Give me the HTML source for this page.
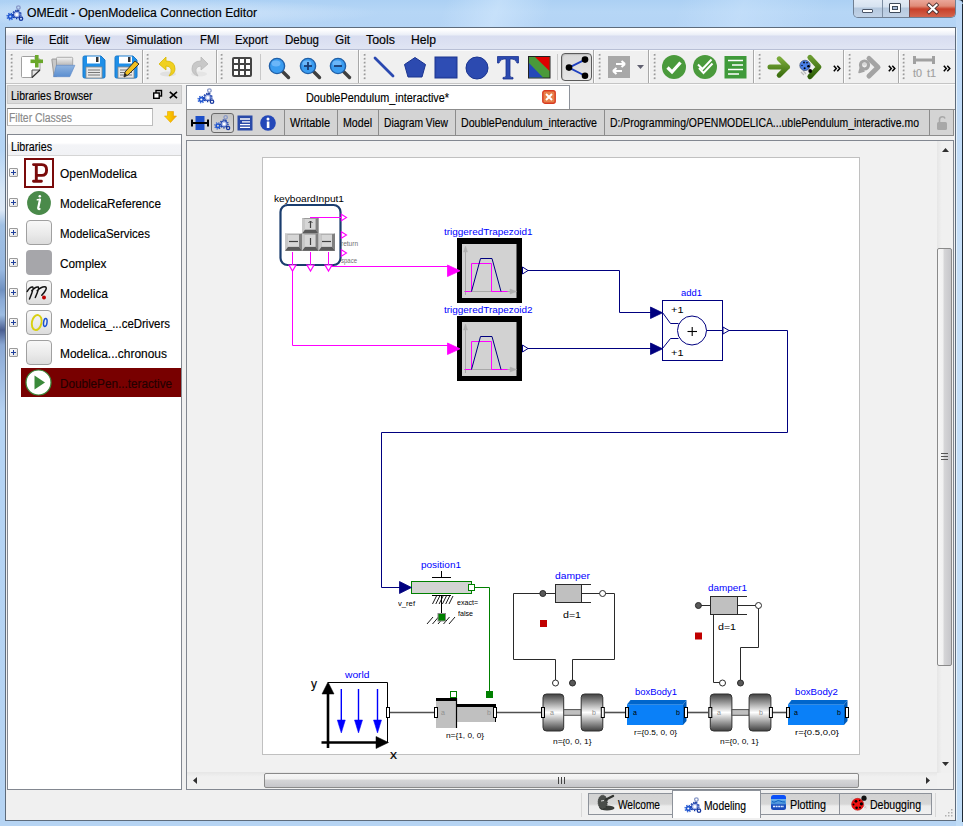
<!DOCTYPE html><html><head><meta charset="utf-8"><style>
html,body{margin:0;padding:0;width:963px;height:826px;overflow:hidden;position:relative;font-family:"Liberation Sans",sans-serif;}
.t{position:absolute;white-space:nowrap;transform-origin:0 0;}
.s{-webkit-text-stroke:0.15px currentColor;}
svg{overflow:visible}
</style></head><body><div style="position:absolute;left:0px;top:0px;width:963px;height:826px;background:linear-gradient(180deg,#acd0f4 0px,#b6d6f6 12px,#b4d4f5 26px,#b6d4f3 100%);"></div>
<div style="position:absolute;left:0px;top:0px;width:963px;height:27px;background:linear-gradient(110deg,rgba(255,255,255,0) 420px,rgba(220,238,255,0.45) 470px,rgba(255,255,255,0) 520px,rgba(255,255,255,0) 640px,rgba(215,235,255,0.35) 700px,rgba(255,255,255,0) 780px);"></div>
<div style="position:absolute;left:0px;top:0px;width:420px;height:28px;background:radial-gradient(ellipse 230px 14px at 150px 13px,rgba(215,232,250,0.9),rgba(215,232,250,0) 100%);"></div>
<div style="position:absolute;left:0px;top:150px;width:5px;height:260px;background:linear-gradient(180deg,rgba(0,0,0,0) 0,#d6e6f6 40px,#dce8f6 60px,#a0c0e4 75px,#98b8e0 120px,#6f90c0 140px,#8aaad6 150px,#9cbce2 165px,#4a5e90 180px,#8aa8d4 195px,#b4d0f0 260px);"></div>
<div style="position:absolute;left:956px;top:0px;width:6px;height:826px;background:linear-gradient(180deg,#bcd8f6,#c6dff8 30%,#c0dcf6 100%);"></div>
<div style="position:absolute;left:956px;top:28px;width:1px;height:792px;background:#e6f2fc;"></div>
<div style="position:absolute;left:962px;top:4px;width:1px;height:818px;background:#1f2a36;"></div>
<svg style="position:absolute;left:955px;top:0px;" width="8" height="6" viewBox="0 0 8 6"><path d="M3 0 Q8 0 8 5 L8 0 Z" fill="#1f2a36"/></svg>
<div style="position:absolute;left:5px;top:27px;width:951px;height:794px;background:#5d6b7b;"></div>
<div style="position:absolute;left:6px;top:28px;width:949px;height:792px;background:#f0f0f0;"></div>
<div class="t s" style="left:27px;top:7px;font-size:12px;line-height:12px;color:#000;transform:scaleX(1.0142);">OMEdit - OpenModelica Connection Editor</div>
<div style="position:absolute;left:853px;top:-2px;width:103px;height:20px;border:1px solid #6f7f93;border-top:none;border-radius:0 0 5px 5px;overflow:hidden;box-sizing:border-box">
<div style="position:absolute;left:0;top:0;width:28px;height:20px;background:linear-gradient(180deg,#e6eef8 0,#d6e2f0 45%,#b5c8de 50%,#c4d4e8 100%);"></div>
<div style="position:absolute;left:28px;top:0;width:1px;height:20px;background:#7d8ea3"></div>
<div style="position:absolute;left:29px;top:0;width:26px;height:20px;background:linear-gradient(180deg,#e6eef8 0,#d6e2f0 45%,#b5c8de 50%,#c4d4e8 100%);"></div>
<div style="position:absolute;left:55px;top:0;width:1px;height:20px;background:#7d4a4a"></div>
<div style="position:absolute;left:56px;top:0;width:47px;height:20px;background:linear-gradient(180deg,#eeb0a4 0,#e08c78 40%,#c8402a 55%,#d46a52 100%);"></div>
</div>
<div style="position:absolute;left:862px;top:9px;width:11px;height:4px;background:#fff;border:1px solid #4a5568;box-sizing:border-box;border-radius:1px"></div>
<div style="position:absolute;left:889px;top:3px;width:12px;height:10px;border:1px solid #3e4a5a;box-sizing:border-box;background:#fff;border-radius:1px"></div>
<div style="position:absolute;left:892px;top:6px;width:6px;height:4px;border:1px solid #3e4a5a;box-sizing:border-box;background:#a8bcd8;"></div>
<svg style="position:absolute;left:926px;top:2px;" width="14" height="12" viewBox="0 0 14 12"><path d="M3 3 L10.5 10 M10.5 3 L3 10" stroke="#4a3030" stroke-width="3.8" stroke-linecap="square"/><path d="M3 3 L10.5 10 M10.5 3 L3 10" stroke="#fff" stroke-width="2.2" stroke-linecap="square"/></svg>
<div style="position:absolute;left:6px;top:28px;width:949px;height:22px;background:linear-gradient(180deg,#ffffff 0px,#fdfdfe 2px,#eaeef7 7px,#d8ddf0 8px,#dfe4f3 20px);"></div>
<div style="position:absolute;left:6px;top:49px;width:949px;height:1px;background:#b8bfd5;"></div>
<div style="position:absolute;left:6px;top:50px;width:949px;height:1px;background:#fbfbfb;"></div>
<div class="t s" style="left:16px;top:34px;font-size:12px;line-height:12px;color:#000;transform:scaleX(0.9050);">File</div>
<div class="t s" style="left:49px;top:34px;font-size:12px;line-height:12px;color:#000;transform:scaleX(0.9430);">Edit</div>
<div class="t s" style="left:85px;top:34px;font-size:12px;line-height:12px;color:#000;transform:scaleX(0.9692);">View</div>
<div class="t s" style="left:126px;top:34px;font-size:12px;line-height:12px;color:#000;transform:scaleX(1.0084);">Simulation</div>
<div class="t s" style="left:200px;top:34px;font-size:12px;line-height:12px;color:#000;transform:scaleX(0.9438);">FMI</div>
<div class="t s" style="left:235px;top:34px;font-size:12px;line-height:12px;color:#000;transform:scaleX(0.9515);">Export</div>
<div class="t s" style="left:285px;top:34px;font-size:12px;line-height:12px;color:#000;transform:scaleX(0.9615);">Debug</div>
<div class="t s" style="left:335px;top:34px;font-size:12px;line-height:12px;color:#000;transform:scaleX(0.9782);">Git</div>
<div class="t s" style="left:366px;top:34px;font-size:12px;line-height:12px;color:#000;transform:scaleX(1.0352);">Tools</div>
<div class="t s" style="left:411px;top:34px;font-size:12px;line-height:12px;color:#000;transform:scaleX(1.0129);">Help</div>
<div style="position:absolute;left:6px;top:83px;width:949px;height:1px;background:#c5c5c5;"></div>
<div style="position:absolute;left:6px;top:84px;width:949px;height:1px;background:#fafafa;"></div>
<svg style="position:absolute;left:3px;top:3px;" width="22" height="20" viewBox="0 0 22 20"><g transform="scale(1.0)"><path d="M15 6.5 L14.5 8 M16.2 14 L17 15" stroke="#1a3a90" stroke-width="1.2"/><circle cx="7.3" cy="13.5" r="1.9000000000000001" fill="none" stroke="#1f55d0" stroke-width="1.6"/><circle cx="7.3" cy="13.5" r="3.3000000000000003" fill="none" stroke="#1f55d0" stroke-width="1.2" stroke-dasharray="1.30 1.30"/><circle cx="13.8" cy="11.5" r="2.6" fill="none" stroke="#1238a8" stroke-width="2.0"/><circle cx="13.8" cy="11.5" r="4.2" fill="none" stroke="#1238a8" stroke-width="1.2" stroke-dasharray="1.47 1.47"/><circle cx="13.8" cy="11.5" r="2.2" fill="#fff" stroke="#a8b8e8" stroke-width="1.2"/><circle cx="15.4" cy="4.6" r="1.8" fill="none" stroke="#8898c8" stroke-width="1.3"/><circle cx="18" cy="15.7" r="1.7" fill="none" stroke="#1a3aa0" stroke-width="1.3"/></g></svg>
<svg style="position:absolute;left:10px;top:53px;" width="3" height="28" viewBox="0 0 3 28"><rect x="0" y="0.0" width="2" height="2" fill="#fafafa"/><rect x="0.7" y="0.9" width="1.8" height="1.8" fill="#9a9a9a"/><rect x="0" y="3.9" width="2" height="2" fill="#fafafa"/><rect x="0.7" y="4.8" width="1.8" height="1.8" fill="#9a9a9a"/><rect x="0" y="7.8" width="2" height="2" fill="#fafafa"/><rect x="0.7" y="8.7" width="1.8" height="1.8" fill="#9a9a9a"/><rect x="0" y="11.7" width="2" height="2" fill="#fafafa"/><rect x="0.7" y="12.6" width="1.8" height="1.8" fill="#9a9a9a"/><rect x="0" y="15.6" width="2" height="2" fill="#fafafa"/><rect x="0.7" y="16.5" width="1.8" height="1.8" fill="#9a9a9a"/><rect x="0" y="19.5" width="2" height="2" fill="#fafafa"/><rect x="0.7" y="20.4" width="1.8" height="1.8" fill="#9a9a9a"/><rect x="0" y="23.4" width="2" height="2" fill="#fafafa"/><rect x="0.7" y="24.3" width="1.8" height="1.8" fill="#9a9a9a"/></svg>
<svg style="position:absolute;left:20px;top:55px;" width="25" height="24" viewBox="0 0 25 24">
<path d="M1.5 2.5 Q1.5 1.5 2.5 1.5 L15 1.5 L15 4 L20 4 L20 15 L12 22.5 L2.5 22.5 Q1.5 22.5 1.5 21.5 Z" fill="#fff" stroke="#a0a0a0" stroke-width="1"/>
<path d="M20 15 L12 15 L12 22.5" fill="#e6e6e6" stroke="#505050" stroke-width="1"/>
<path d="M20 15 L12 22.5" stroke="#303030" stroke-width="1.2"/>
<rect x="15" y="0" width="3.6" height="12.5" fill="#6aa82a"/>
<rect x="10.5" y="4.5" width="12.5" height="3.6" fill="#6aa82a"/>
</svg>
<svg style="position:absolute;left:51px;top:55px;" width="25" height="24" viewBox="0 0 25 24">
<defs><linearGradient id="fg1" x1="0" y1="0" x2="0" y2="1"><stop offset="0" stop-color="#f4f4f4"/><stop offset="1" stop-color="#b0b0b0"/></linearGradient>
<linearGradient id="fb1" x1="0" y1="0" x2="0" y2="1"><stop offset="0" stop-color="#90b4e0"/><stop offset="1" stop-color="#5a8ed0"/></linearGradient></defs>
<path d="M0.8 4.5 Q0.8 4 1.5 4 L5.5 4 L5.5 21.5 L3 21.5 Z" fill="#c8c8c8" stroke="#8a8a8a" stroke-width="0.8"/>
<rect x="5.5" y="2.3" width="16.2" height="9" rx="1" fill="url(#fg1)" stroke="#9a9a9a" stroke-width="0.8"/>
<path d="M5.4 10.3 L23.9 10.3 L18.8 21.7 L2.5 21.7 Z" fill="url(#fb1)" stroke="#5a88c8" stroke-width="0.6"/>
</svg>
<svg style="position:absolute;left:82px;top:55px;" width="25" height="24" viewBox="0 0 25 24">
<path d="M1 2.5 Q1 1 2.5 1 L19 1 L23 5 L23 21.5 Q23 23 21.5 23 L2.5 23 Q1 23 1 21.5 Z" fill="#1e8fe8" stroke="#1a78c8"/>
<rect x="5" y="1.5" width="13" height="7" fill="#fff"/>
<rect x="14" y="2" width="2.5" height="5" fill="#333"/>
<rect x="4" y="12" width="16" height="11" fill="#e8e8e8" stroke="#888" stroke-width="0.8"/>
<path d="M6 15 H18 M6 17.5 H18 M6 20 H18" stroke="#777" stroke-width="1"/>
</svg>
<svg style="position:absolute;left:114px;top:55px;" width="25" height="24" viewBox="0 0 25 24">
<path d="M1 2.5 Q1 1 2.5 1 L19 1 L23 5 L23 21.5 Q23 23 21.5 23 L2.5 23 Q1 23 1 21.5 Z" fill="#1e8fe8" stroke="#1a78c8"/>
<rect x="5" y="1.5" width="13" height="7" fill="#fff"/>
<rect x="14" y="2" width="2.5" height="5" fill="#333"/>
<rect x="4" y="12" width="16" height="11" fill="#e8e8e8" stroke="#888" stroke-width="0.8"/>
<path d="M6 15 H18 M6 17.5 H18 M6 20 H18" stroke="#777" stroke-width="1"/>
<path d="M10 22 L11 17 L21 6 L25 9 L14 20 Z" fill="#f2c020" stroke="#333" stroke-width="1"/><path d="M10 22 L11 18 L13 20 Z" fill="#222"/></svg>
<div style="position:absolute;left:142px;top:50px;width:1px;height:33px;background:#a8a8a8;"></div>
<div style="position:absolute;left:143px;top:51px;width:1px;height:32px;background:#fdfdfd;"></div>
<svg style="position:absolute;left:146px;top:53px;" width="3" height="28" viewBox="0 0 3 28"><rect x="0" y="0.0" width="2" height="2" fill="#fafafa"/><rect x="0.7" y="0.9" width="1.8" height="1.8" fill="#9a9a9a"/><rect x="0" y="3.9" width="2" height="2" fill="#fafafa"/><rect x="0.7" y="4.8" width="1.8" height="1.8" fill="#9a9a9a"/><rect x="0" y="7.8" width="2" height="2" fill="#fafafa"/><rect x="0.7" y="8.7" width="1.8" height="1.8" fill="#9a9a9a"/><rect x="0" y="11.7" width="2" height="2" fill="#fafafa"/><rect x="0.7" y="12.6" width="1.8" height="1.8" fill="#9a9a9a"/><rect x="0" y="15.6" width="2" height="2" fill="#fafafa"/><rect x="0.7" y="16.5" width="1.8" height="1.8" fill="#9a9a9a"/><rect x="0" y="19.5" width="2" height="2" fill="#fafafa"/><rect x="0.7" y="20.4" width="1.8" height="1.8" fill="#9a9a9a"/><rect x="0" y="23.4" width="2" height="2" fill="#fafafa"/><rect x="0.7" y="24.3" width="1.8" height="1.8" fill="#9a9a9a"/></svg>
<svg style="position:absolute;left:158px;top:56px;" width="20" height="21" viewBox="0 0 20 21">
<ellipse cx="10" cy="18" rx="8" ry="2.5" fill="#d8d8d8" opacity="0.7"/>
<path d="M1 8 L8 1 L8 5 Q17 5 17 13 Q17 18 11 20 Q14 16 13 13 Q12 10 8 10 L8 14 Z" fill="#f0d020" stroke="#d8b800" stroke-width="0.8"/>
</svg>
<svg style="position:absolute;left:190px;top:56px;" width="20" height="21" viewBox="0 0 20 21">
<ellipse cx="9" cy="18" rx="8" ry="2.5" fill="#e0e0e0" opacity="0.7"/>
<path d="M18 8 L11 1 L11 5 Q2 5 2 13 Q2 18 8 20 Q5 16 6 13 Q7 10 11 10 L11 14 Z" fill="#c8c8c8" stroke="#b8b8b8" stroke-width="0.8"/>
</svg>
<div style="position:absolute;left:216px;top:50px;width:1px;height:33px;background:#a8a8a8;"></div>
<div style="position:absolute;left:217px;top:51px;width:1px;height:32px;background:#fdfdfd;"></div>
<svg style="position:absolute;left:220px;top:53px;" width="3" height="28" viewBox="0 0 3 28"><rect x="0" y="0.0" width="2" height="2" fill="#fafafa"/><rect x="0.7" y="0.9" width="1.8" height="1.8" fill="#9a9a9a"/><rect x="0" y="3.9" width="2" height="2" fill="#fafafa"/><rect x="0.7" y="4.8" width="1.8" height="1.8" fill="#9a9a9a"/><rect x="0" y="7.8" width="2" height="2" fill="#fafafa"/><rect x="0.7" y="8.7" width="1.8" height="1.8" fill="#9a9a9a"/><rect x="0" y="11.7" width="2" height="2" fill="#fafafa"/><rect x="0.7" y="12.6" width="1.8" height="1.8" fill="#9a9a9a"/><rect x="0" y="15.6" width="2" height="2" fill="#fafafa"/><rect x="0.7" y="16.5" width="1.8" height="1.8" fill="#9a9a9a"/><rect x="0" y="19.5" width="2" height="2" fill="#fafafa"/><rect x="0.7" y="20.4" width="1.8" height="1.8" fill="#9a9a9a"/><rect x="0" y="23.4" width="2" height="2" fill="#fafafa"/><rect x="0.7" y="24.3" width="1.8" height="1.8" fill="#9a9a9a"/></svg>
<svg style="position:absolute;left:231px;top:56px;" width="22" height="22" viewBox="0 0 22 22">
<rect x="1" y="1" width="20" height="20" rx="2" fill="#444"/>
<rect x="3" y="3" width="4" height="4" fill="#fff"/><rect x="3" y="9" width="4" height="4" fill="#fff"/><rect x="3" y="15" width="4" height="4" fill="#fff"/><rect x="9" y="3" width="4" height="4" fill="#fff"/><rect x="9" y="9" width="4" height="4" fill="#fff"/><rect x="9" y="15" width="4" height="4" fill="#fff"/><rect x="15" y="3" width="4" height="4" fill="#fff"/><rect x="15" y="9" width="4" height="4" fill="#fff"/><rect x="15" y="15" width="4" height="4" fill="#fff"/></svg>
<div style="position:absolute;left:260px;top:54px;width:1px;height:26px;background:#c8c8c8;"></div>
<svg style="position:absolute;left:268px;top:57px;" width="23" height="22" viewBox="0 0 23 22">
<path d="M13.5 13.5 L20.5 20.5" stroke="#404040" stroke-width="3.4" stroke-linecap="round"/>
<circle cx="9" cy="9" r="7.6" fill="#3a9cf0" stroke="#1f5fa8" stroke-width="1.4"/>
<ellipse cx="8" cy="6.5" rx="4.5" ry="3" fill="#8cc8ff" opacity="0.6"/>
</svg>
<svg style="position:absolute;left:299px;top:57px;" width="23" height="22" viewBox="0 0 23 22">
<path d="M13.5 13.5 L20.5 20.5" stroke="#404040" stroke-width="3.4" stroke-linecap="round"/>
<circle cx="9" cy="9" r="7.6" fill="#3a9cf0" stroke="#1f5fa8" stroke-width="1.4"/>
<ellipse cx="8" cy="6.5" rx="4.5" ry="3" fill="#8cc8ff" opacity="0.6"/>
<path d="M5 9 H13" stroke="#1a3a70" stroke-width="1.8"/><path d="M9 5 V13" stroke="#1a3a70" stroke-width="1.8"/></svg>
<svg style="position:absolute;left:329px;top:57px;" width="23" height="22" viewBox="0 0 23 22">
<path d="M13.5 13.5 L20.5 20.5" stroke="#404040" stroke-width="3.4" stroke-linecap="round"/>
<circle cx="9" cy="9" r="7.6" fill="#3a9cf0" stroke="#1f5fa8" stroke-width="1.4"/>
<ellipse cx="8" cy="6.5" rx="4.5" ry="3" fill="#8cc8ff" opacity="0.6"/>
<path d="M5 9 H13" stroke="#1a3a70" stroke-width="1.8"/></svg>
<div style="position:absolute;left:358px;top:50px;width:1px;height:33px;background:#a8a8a8;"></div>
<div style="position:absolute;left:359px;top:51px;width:1px;height:32px;background:#fdfdfd;"></div>
<svg style="position:absolute;left:363px;top:53px;" width="3" height="28" viewBox="0 0 3 28"><rect x="0" y="0.0" width="2" height="2" fill="#fafafa"/><rect x="0.7" y="0.9" width="1.8" height="1.8" fill="#9a9a9a"/><rect x="0" y="3.9" width="2" height="2" fill="#fafafa"/><rect x="0.7" y="4.8" width="1.8" height="1.8" fill="#9a9a9a"/><rect x="0" y="7.8" width="2" height="2" fill="#fafafa"/><rect x="0.7" y="8.7" width="1.8" height="1.8" fill="#9a9a9a"/><rect x="0" y="11.7" width="2" height="2" fill="#fafafa"/><rect x="0.7" y="12.6" width="1.8" height="1.8" fill="#9a9a9a"/><rect x="0" y="15.6" width="2" height="2" fill="#fafafa"/><rect x="0.7" y="16.5" width="1.8" height="1.8" fill="#9a9a9a"/><rect x="0" y="19.5" width="2" height="2" fill="#fafafa"/><rect x="0.7" y="20.4" width="1.8" height="1.8" fill="#9a9a9a"/><rect x="0" y="23.4" width="2" height="2" fill="#fafafa"/><rect x="0.7" y="24.3" width="1.8" height="1.8" fill="#9a9a9a"/></svg>
<svg style="position:absolute;left:373px;top:56px;" width="22" height="22" viewBox="0 0 22 22"><path d="M2 2 L20 20" stroke="#2a48b0" stroke-width="2.8" stroke-linecap="round"/></svg>
<svg style="position:absolute;left:403px;top:56px;" width="24" height="23" viewBox="0 0 24 23"><path d="M12 1.5 L22.5 8.5 L19 21 L5 21 L1.5 8.5 Z" fill="#2c4ab0" stroke="#1a3490" stroke-width="1"/></svg>
<svg style="position:absolute;left:434px;top:56px;" width="24" height="23" viewBox="0 0 24 23"><rect x="1" y="1" width="22" height="21" fill="#2c4ab0" stroke="#1a3490"/><rect x="3" y="3" width="18" height="17" fill="#3050b8" opacity="0.5"/></svg>
<svg style="position:absolute;left:465px;top:56px;" width="24" height="24" viewBox="0 0 24 24"><circle cx="12" cy="12" r="11" fill="#2c4ab0" stroke="#1a3490"/></svg>
<svg style="position:absolute;left:496px;top:55px;" width="24" height="25" viewBox="0 0 24 25"><path d="M1.5 1.5 H22.5 V8 H21 Q20 4 16 4 H14 V21 Q14 22.5 17 22.5 V24 H7 V22.5 Q10 22.5 10 21 V4 H8 Q4 4 3 8 H1.5 Z" fill="#2c4ab0" stroke="#1a3490" stroke-width="0.8"/></svg>
<svg style="position:absolute;left:528px;top:56px;" width="23" height="23" viewBox="0 0 23 23">
<rect x="0.5" y="0.5" width="21.5" height="21.5" fill="#4a9a3a" stroke="#222" stroke-width="1"/>
<path d="M7 1 L21.5 1 L21.5 15 Z" fill="#e00000"/>
<path d="M1 7 L1 21.5 L15 21.5 Z" fill="#2448b8"/>
</svg>
<div style="position:absolute;left:557px;top:54px;width:1px;height:26px;background:#c8c8c8;"></div>
<div style="position:absolute;left:561px;top:53px;width:31px;height:28px;border:1px solid #5a5a5a;border-radius:4px;box-sizing:border-box;background:linear-gradient(180deg,#d8d8d8,#e6e6e6);box-shadow:inset 1px 1px 1px #bdbdbd;"></div>
<svg style="position:absolute;left:563px;top:54px;" width="28" height="26" viewBox="0 0 28 26"><path d="M6 13.6 L22 5.6 M6 13.6 L22 21.7" stroke="#1e40c0" stroke-width="1.8"/><circle cx="6" cy="13.6" r="3.3" fill="#000"/><circle cx="22" cy="5.6" r="3.3" fill="#000"/><circle cx="22" cy="21.7" r="3.3" fill="#000"/></svg>
<div style="position:absolute;left:593px;top:50px;width:1px;height:33px;background:#a8a8a8;"></div>
<div style="position:absolute;left:594px;top:51px;width:1px;height:32px;background:#fdfdfd;"></div>
<svg style="position:absolute;left:598px;top:53px;" width="3" height="28" viewBox="0 0 3 28"><rect x="0" y="0.0" width="2" height="2" fill="#fafafa"/><rect x="0.7" y="0.9" width="1.8" height="1.8" fill="#9a9a9a"/><rect x="0" y="3.9" width="2" height="2" fill="#fafafa"/><rect x="0.7" y="4.8" width="1.8" height="1.8" fill="#9a9a9a"/><rect x="0" y="7.8" width="2" height="2" fill="#fafafa"/><rect x="0.7" y="8.7" width="1.8" height="1.8" fill="#9a9a9a"/><rect x="0" y="11.7" width="2" height="2" fill="#fafafa"/><rect x="0.7" y="12.6" width="1.8" height="1.8" fill="#9a9a9a"/><rect x="0" y="15.6" width="2" height="2" fill="#fafafa"/><rect x="0.7" y="16.5" width="1.8" height="1.8" fill="#9a9a9a"/><rect x="0" y="19.5" width="2" height="2" fill="#fafafa"/><rect x="0.7" y="20.4" width="1.8" height="1.8" fill="#9a9a9a"/><rect x="0" y="23.4" width="2" height="2" fill="#fafafa"/><rect x="0.7" y="24.3" width="1.8" height="1.8" fill="#9a9a9a"/></svg>
<svg style="position:absolute;left:608px;top:56px;" width="38" height="23" viewBox="0 0 38 23">
<rect x="0" y="0" width="22" height="22" fill="#a8a8a8"/>
<path d="M8 8 H17 M17 8 L13.5 5 M17 8 L13.5 11" stroke="#fff" stroke-width="2.2" fill="none"/>
<path d="M14 15 H5 M5 15 L8.5 12 M5 15 L8.5 18" stroke="#fff" stroke-width="2.2" fill="none"/>
<path d="M29 9 L36 9 L32.5 13 Z" fill="#606070"/>
</svg>
<div style="position:absolute;left:648px;top:50px;width:1px;height:33px;background:#a8a8a8;"></div>
<div style="position:absolute;left:649px;top:51px;width:1px;height:32px;background:#fdfdfd;"></div>
<svg style="position:absolute;left:653px;top:53px;" width="3" height="28" viewBox="0 0 3 28"><rect x="0" y="0.0" width="2" height="2" fill="#fafafa"/><rect x="0.7" y="0.9" width="1.8" height="1.8" fill="#9a9a9a"/><rect x="0" y="3.9" width="2" height="2" fill="#fafafa"/><rect x="0.7" y="4.8" width="1.8" height="1.8" fill="#9a9a9a"/><rect x="0" y="7.8" width="2" height="2" fill="#fafafa"/><rect x="0.7" y="8.7" width="1.8" height="1.8" fill="#9a9a9a"/><rect x="0" y="11.7" width="2" height="2" fill="#fafafa"/><rect x="0.7" y="12.6" width="1.8" height="1.8" fill="#9a9a9a"/><rect x="0" y="15.6" width="2" height="2" fill="#fafafa"/><rect x="0.7" y="16.5" width="1.8" height="1.8" fill="#9a9a9a"/><rect x="0" y="19.5" width="2" height="2" fill="#fafafa"/><rect x="0.7" y="20.4" width="1.8" height="1.8" fill="#9a9a9a"/><rect x="0" y="23.4" width="2" height="2" fill="#fafafa"/><rect x="0.7" y="24.3" width="1.8" height="1.8" fill="#9a9a9a"/></svg>
<svg style="position:absolute;left:662px;top:55px;" width="25" height="25" viewBox="0 0 25 25"><circle cx="12" cy="12" r="12" fill="#4a9a3c"/><path d="M5.5 12.5 L10 17 L18.5 7.5" stroke="#fff" stroke-width="3.2" fill="none"/></svg>
<svg style="position:absolute;left:693px;top:55px;" width="25" height="25" viewBox="0 0 25 25"><circle cx="12" cy="12" r="12" fill="#4a9a3c"/><path d="M5 9.5 L9.5 14 L18.5 4.5" stroke="#fff" stroke-width="2" fill="none"/><path d="M6 13 L10.5 18 L19.5 8.5" stroke="#fff" stroke-width="2" fill="none"/></svg>
<svg style="position:absolute;left:724px;top:56px;" width="23" height="23" viewBox="0 0 23 23"><rect x="0.5" y="0" width="22" height="22.5" fill="#3f9a3a"/><path d="M4 4.5 H19 M8 9 H19 M4 13.5 H19 M4 18 H15" stroke="#fff" stroke-width="1.6"/></svg>
<div style="position:absolute;left:753px;top:50px;width:1px;height:33px;background:#a8a8a8;"></div>
<div style="position:absolute;left:754px;top:51px;width:1px;height:32px;background:#fdfdfd;"></div>
<svg style="position:absolute;left:758px;top:53px;" width="3" height="28" viewBox="0 0 3 28"><rect x="0" y="0.0" width="2" height="2" fill="#fafafa"/><rect x="0.7" y="0.9" width="1.8" height="1.8" fill="#9a9a9a"/><rect x="0" y="3.9" width="2" height="2" fill="#fafafa"/><rect x="0.7" y="4.8" width="1.8" height="1.8" fill="#9a9a9a"/><rect x="0" y="7.8" width="2" height="2" fill="#fafafa"/><rect x="0.7" y="8.7" width="1.8" height="1.8" fill="#9a9a9a"/><rect x="0" y="11.7" width="2" height="2" fill="#fafafa"/><rect x="0.7" y="12.6" width="1.8" height="1.8" fill="#9a9a9a"/><rect x="0" y="15.6" width="2" height="2" fill="#fafafa"/><rect x="0.7" y="16.5" width="1.8" height="1.8" fill="#9a9a9a"/><rect x="0" y="19.5" width="2" height="2" fill="#fafafa"/><rect x="0.7" y="20.4" width="1.8" height="1.8" fill="#9a9a9a"/><rect x="0" y="23.4" width="2" height="2" fill="#fafafa"/><rect x="0.7" y="24.3" width="1.8" height="1.8" fill="#9a9a9a"/></svg>
<svg style="position:absolute;left:764px;top:54px;" width="30" height="28" viewBox="0 0 30 28"><defs><linearGradient id="ga1" x1="0" y1="0" x2="0" y2="1"><stop offset="0" stop-color="#7aaa3a"/><stop offset="1" stop-color="#3d7010"/></linearGradient></defs><path d="M6 13 L23.5 13 M15.2 4.8 L23.5 13 L15.2 21.2" stroke="url(#ga1)" stroke-width="5" stroke-linecap="round" stroke-linejoin="round" fill="none"/></svg>
<svg style="position:absolute;left:796px;top:53px;" width="30" height="28" viewBox="0 0 30 28"><defs><linearGradient id="ga2" x1="0" y1="0" x2="0" y2="1"><stop offset="0" stop-color="#6a9a30"/><stop offset="1" stop-color="#2f6008"/></linearGradient></defs><path d="M14 4.5 L22.8 14 L14 23.5" stroke="url(#ga2)" stroke-width="5.2" stroke-linecap="round" stroke-linejoin="round" fill="none"/><path d="M5 19 L8 22 M7 17.5 L10 21" stroke="#bbb" stroke-width="1.2"/><circle cx="9" cy="12.4" r="5.2" fill="#4a80e8" stroke="#2a3a60" stroke-width="0.6"/><circle cx="14.2" cy="18" r="1.9" fill="#000"/><circle cx="8" cy="9.5" r="0.9" fill="#000"/><circle cx="11" cy="9.8" r="0.8" fill="#000"/><circle cx="12.5" cy="13.3" r="1.3" fill="#000"/><circle cx="6" cy="12.5" r="0.7" fill="#000"/><circle cx="8.6" cy="15.3" r="1" fill="#000"/></svg>
<svg style="position:absolute;left:833px;top:65px;" width="8" height="7" viewBox="0 0 8 7"><path d="M0.8 0.8 L3.3 3.5 L0.8 6.2 M4.3 0.8 L6.8 3.5 L4.3 6.2" stroke="#000" stroke-width="1.5" fill="none"/></svg>
<div style="position:absolute;left:843px;top:50px;width:1px;height:33px;background:#a8a8a8;"></div>
<div style="position:absolute;left:844px;top:51px;width:1px;height:32px;background:#fdfdfd;"></div>
<svg style="position:absolute;left:848px;top:53px;" width="3" height="28" viewBox="0 0 3 28"><rect x="0" y="0.0" width="2" height="2" fill="#fafafa"/><rect x="0.7" y="0.9" width="1.8" height="1.8" fill="#9a9a9a"/><rect x="0" y="3.9" width="2" height="2" fill="#fafafa"/><rect x="0.7" y="4.8" width="1.8" height="1.8" fill="#9a9a9a"/><rect x="0" y="7.8" width="2" height="2" fill="#fafafa"/><rect x="0.7" y="8.7" width="1.8" height="1.8" fill="#9a9a9a"/><rect x="0" y="11.7" width="2" height="2" fill="#fafafa"/><rect x="0.7" y="12.6" width="1.8" height="1.8" fill="#9a9a9a"/><rect x="0" y="15.6" width="2" height="2" fill="#fafafa"/><rect x="0.7" y="16.5" width="1.8" height="1.8" fill="#9a9a9a"/><rect x="0" y="19.5" width="2" height="2" fill="#fafafa"/><rect x="0.7" y="20.4" width="1.8" height="1.8" fill="#9a9a9a"/><rect x="0" y="23.4" width="2" height="2" fill="#fafafa"/><rect x="0.7" y="24.3" width="1.8" height="1.8" fill="#9a9a9a"/></svg>
<svg style="position:absolute;left:856px;top:54px;" width="26" height="26" viewBox="0 0 26 26"><path d="M13 4.5 L22 13.2 L13 22" stroke="#a4a4a4" stroke-width="5" stroke-linecap="round" stroke-linejoin="round" fill="none"/><circle cx="8.5" cy="11" r="4" fill="none" stroke="#a4a4a4" stroke-width="3.2"/><path d="M4.5 13 L3 18.5 L8.5 17" fill="#a4a4a4" stroke="#a4a4a4" stroke-width="1.5" stroke-linejoin="round"/><circle cx="8.5" cy="10" r="1.8" fill="#d8d8d8"/></svg>
<svg style="position:absolute;left:888px;top:65px;" width="8" height="7" viewBox="0 0 8 7"><path d="M0.8 0.8 L3.3 3.5 L0.8 6.2 M4.3 0.8 L6.8 3.5 L4.3 6.2" stroke="#000" stroke-width="1.5" fill="none"/></svg>
<div style="position:absolute;left:898px;top:50px;width:1px;height:33px;background:#a8a8a8;"></div>
<div style="position:absolute;left:899px;top:51px;width:1px;height:32px;background:#fdfdfd;"></div>
<svg style="position:absolute;left:902px;top:53px;" width="3" height="28" viewBox="0 0 3 28"><rect x="0" y="0.0" width="2" height="2" fill="#fafafa"/><rect x="0.7" y="0.9" width="1.8" height="1.8" fill="#9a9a9a"/><rect x="0" y="3.9" width="2" height="2" fill="#fafafa"/><rect x="0.7" y="4.8" width="1.8" height="1.8" fill="#9a9a9a"/><rect x="0" y="7.8" width="2" height="2" fill="#fafafa"/><rect x="0.7" y="8.7" width="1.8" height="1.8" fill="#9a9a9a"/><rect x="0" y="11.7" width="2" height="2" fill="#fafafa"/><rect x="0.7" y="12.6" width="1.8" height="1.8" fill="#9a9a9a"/><rect x="0" y="15.6" width="2" height="2" fill="#fafafa"/><rect x="0.7" y="16.5" width="1.8" height="1.8" fill="#9a9a9a"/><rect x="0" y="19.5" width="2" height="2" fill="#fafafa"/><rect x="0.7" y="20.4" width="1.8" height="1.8" fill="#9a9a9a"/><rect x="0" y="23.4" width="2" height="2" fill="#fafafa"/><rect x="0.7" y="24.3" width="1.8" height="1.8" fill="#9a9a9a"/></svg>
<svg style="position:absolute;left:912px;top:56px;" width="24" height="24" viewBox="0 0 24 24"><rect x="1" y="0" width="3" height="8" fill="#a0a0a0"/><rect x="20" y="0" width="3" height="8" fill="#a0a0a0"/><rect x="1" y="2.5" width="22" height="3" fill="#a0a0a0"/></svg>
<div class="t s" style="left:913px;top:68px;font-size:11px;line-height:11px;color:#a0a0a0;transform:scaleX(0.9811);">t0</div>
<div class="t s" style="left:927px;top:68px;font-size:11px;line-height:11px;color:#a0a0a0;transform:scaleX(0.9811);">t1</div>
<svg style="position:absolute;left:943px;top:65px;" width="8" height="7" viewBox="0 0 8 7"><path d="M0.8 0.8 L3.3 3.5 L0.8 6.2 M4.3 0.8 L6.8 3.5 L4.3 6.2" stroke="#000" stroke-width="1.5" fill="none"/></svg>
<div style="position:absolute;left:7px;top:85px;width:175px;height:19px;background:#dadada;border:1px solid #c9c9c9;box-sizing:border-box;"></div>
<div class="t s" style="left:11px;top:90px;font-size:12px;line-height:12px;color:#000;transform:scaleX(0.8729);">Libraries Browser</div>
<svg style="position:absolute;left:153px;top:90px;" width="9" height="9" viewBox="0 0 9 9"><rect x="3" y="0.5" width="5.5" height="5.5" fill="none" stroke="#000" stroke-width="1.4"/><rect x="0.7" y="3" width="5.5" height="5.3" fill="#fff" stroke="#000" stroke-width="1.4"/></svg>
<svg style="position:absolute;left:169px;top:91px;" width="9" height="8" viewBox="0 0 9 8"><path d="M0.8 0.8 L8 7.2 M8 0.8 L0.8 7.2" stroke="#000" stroke-width="1.6"/></svg>
<div style="position:absolute;left:7px;top:108px;width:146px;height:18px;background:#fff;border:1px solid #8c8c8c;border-color:#7a7a7a #bdbdbd #bdbdbd #a8a8a8;box-sizing:border-box;"></div>
<div class="t s" style="left:9px;top:112px;font-size:12px;line-height:12px;color:#8a8a8a;transform:scaleX(0.8668);">Filter Classes</div>
<svg style="position:absolute;left:164px;top:111px;" width="13" height="12" viewBox="0 0 13 12"><defs><linearGradient id="ga" x1="0" x2="1"><stop offset="0" stop-color="#ffe000"/><stop offset="1" stop-color="#f0a000"/></linearGradient></defs><path d="M3.5 0.5 H9.5 V5 H12.5 L6.5 11.5 L0.5 5 H3.5 Z" fill="url(#ga)" stroke="#e8a000" stroke-width="0.6"/></svg>
<div style="position:absolute;left:7px;top:134px;width:175px;height:656px;background:#fff;border:1px solid #828790;box-sizing:border-box;"></div>
<div style="position:absolute;left:8px;top:135px;width:173px;height:21px;background:linear-gradient(180deg,#ffffff 0,#ffffff 40%,#f3f4f7 50%,#f1f2f5 100%);border-bottom:1px solid #d5d5d5;box-sizing:border-box;"></div>
<div class="t s" style="left:11px;top:141px;font-size:12px;line-height:12px;color:#000;transform:scaleX(0.8909);">Libraries</div>
<div style="position:absolute;left:9px;top:168px;width:9px;height:9px;background:linear-gradient(135deg,#fff,#e0e0e0);border:1px solid #9a9a9a;box-sizing:border-box;border-radius:1px;"></div>
<div style="position:absolute;left:11px;top:172px;width:5px;height:1px;background:#1e3f9c;"></div>
<div style="position:absolute;left:13px;top:170px;width:1px;height:5px;background:#1e3f9c;"></div>
<div class="t s" style="left:60px;top:168px;font-size:12px;line-height:12px;color:#000;transform:scaleX(0.9951);">OpenModelica</div>
<div style="position:absolute;left:9px;top:198px;width:9px;height:9px;background:linear-gradient(135deg,#fff,#e0e0e0);border:1px solid #9a9a9a;box-sizing:border-box;border-radius:1px;"></div>
<div style="position:absolute;left:11px;top:202px;width:5px;height:1px;background:#1e3f9c;"></div>
<div style="position:absolute;left:13px;top:200px;width:1px;height:5px;background:#1e3f9c;"></div>
<div class="t s" style="left:60px;top:198px;font-size:12px;line-height:12px;color:#000;transform:scaleX(0.9769);">ModelicaReference</div>
<div style="position:absolute;left:9px;top:228px;width:9px;height:9px;background:linear-gradient(135deg,#fff,#e0e0e0);border:1px solid #9a9a9a;box-sizing:border-box;border-radius:1px;"></div>
<div style="position:absolute;left:11px;top:232px;width:5px;height:1px;background:#1e3f9c;"></div>
<div style="position:absolute;left:13px;top:230px;width:1px;height:5px;background:#1e3f9c;"></div>
<div class="t s" style="left:60px;top:228px;font-size:12px;line-height:12px;color:#000;transform:scaleX(0.9570);">ModelicaServices</div>
<div style="position:absolute;left:9px;top:258px;width:9px;height:9px;background:linear-gradient(135deg,#fff,#e0e0e0);border:1px solid #9a9a9a;box-sizing:border-box;border-radius:1px;"></div>
<div style="position:absolute;left:11px;top:262px;width:5px;height:1px;background:#1e3f9c;"></div>
<div style="position:absolute;left:13px;top:260px;width:1px;height:5px;background:#1e3f9c;"></div>
<div class="t s" style="left:60px;top:258px;font-size:12px;line-height:12px;color:#000;transform:scaleX(0.9820);">Complex</div>
<div style="position:absolute;left:9px;top:288px;width:9px;height:9px;background:linear-gradient(135deg,#fff,#e0e0e0);border:1px solid #9a9a9a;box-sizing:border-box;border-radius:1px;"></div>
<div style="position:absolute;left:11px;top:292px;width:5px;height:1px;background:#1e3f9c;"></div>
<div style="position:absolute;left:13px;top:290px;width:1px;height:5px;background:#1e3f9c;"></div>
<div class="t s" style="left:60px;top:288px;font-size:12px;line-height:12px;color:#000;transform:scaleX(0.9995);">Modelica</div>
<div style="position:absolute;left:9px;top:318px;width:9px;height:9px;background:linear-gradient(135deg,#fff,#e0e0e0);border:1px solid #9a9a9a;box-sizing:border-box;border-radius:1px;"></div>
<div style="position:absolute;left:11px;top:322px;width:5px;height:1px;background:#1e3f9c;"></div>
<div style="position:absolute;left:13px;top:320px;width:1px;height:5px;background:#1e3f9c;"></div>
<div class="t s" style="left:60px;top:318px;font-size:12px;line-height:12px;color:#000;transform:scaleX(0.9534);">Modelica_...ceDrivers</div>
<div style="position:absolute;left:9px;top:348px;width:9px;height:9px;background:linear-gradient(135deg,#fff,#e0e0e0);border:1px solid #9a9a9a;box-sizing:border-box;border-radius:1px;"></div>
<div style="position:absolute;left:11px;top:352px;width:5px;height:1px;background:#1e3f9c;"></div>
<div style="position:absolute;left:13px;top:350px;width:1px;height:5px;background:#1e3f9c;"></div>
<div class="t s" style="left:60px;top:348px;font-size:12px;line-height:12px;color:#000;transform:scaleX(0.9963);">Modelica...chronous</div>
<div style="position:absolute;left:21px;top:368px;width:160px;height:29px;background:#780000;"></div>
<div class="t s" style="left:60px;top:378px;font-size:12px;line-height:12px;color:#230000;transform:scaleX(0.9762);">DoublePen...teractive</div>
<svg style="position:absolute;left:24px;top:158px;" width="30" height="30" viewBox="0 0 30 30"><rect x="1" y="1" width="28" height="28" fill="#fff" stroke="#7a0a0a" stroke-width="2"/><path d="M9.5 6.6 L17.8 6.6 Q22.6 6.6 22.6 12 Q22.6 17.4 17.8 17.4 L12.3 17.4 M12.3 6.6 L12.3 23.3 M9.5 23.3 L17.4 23.3" stroke="#7a0a0a" stroke-width="2.9" stroke-linecap="round" fill="none"/></svg>
<svg style="position:absolute;left:25px;top:189px;" width="28" height="28" viewBox="0 0 28 28"><circle cx="14" cy="14" r="11.9" fill="#4a8a4a"/><circle cx="14.8" cy="7.2" r="1.3" fill="#fff"/><path d="M15 10.5 L13.2 19 Q13 20.2 14.6 20" stroke="#fff" stroke-width="2.2" stroke-linecap="round" fill="none"/><path d="M12.3 10.8 L15 10.5" stroke="#fff" stroke-width="1.4" stroke-linecap="round"/></svg>
<div style="position:absolute;left:26px;top:220px;width:26px;height:25px;background:linear-gradient(180deg,#f8f8f8,#e9e9e9 60%,#dcdcdc);border:1.5px solid #a0a0a0;border-radius:4px;box-sizing:border-box;"></div>
<div style="position:absolute;left:26px;top:250px;width:26px;height:25px;background:#a6a6aa;border-radius:4px;"></div>
<div style="position:absolute;left:26px;top:280px;width:26px;height:25px;background:linear-gradient(180deg,#f8f8f8,#e9e9e9 60%,#dcdcdc);border:1.5px solid #a0a0a0;border-radius:4px;box-sizing:border-box;"></div>
<svg style="position:absolute;left:26px;top:280px;" width="26" height="25" viewBox="0 0 26 25"><path d="M1.2 11.5 Q4 6.5 6.8 7 Q8.2 8 3.5 19 M5.8 10.8 Q9.5 6.2 12.3 7 Q13.5 8.2 9.3 17.5 M11.2 10.8 Q16 6 19.8 7 Q21.8 8.5 15.8 15.2" stroke="#111" stroke-width="1.5" fill="none" stroke-linecap="round"/><circle cx="18" cy="17.5" r="2" fill="#c00000"/></svg>
<div style="position:absolute;left:26px;top:310px;width:26px;height:25px;background:linear-gradient(180deg,#f8f8f8,#e9e9e9 60%,#dcdcdc);border:1.5px solid #a0a0a0;border-radius:4px;box-sizing:border-box;"></div>
<svg style="position:absolute;left:26px;top:310px;" width="26" height="25" viewBox="0 0 26 25"><ellipse cx="10.7" cy="12.5" rx="4.8" ry="7.6" fill="none" stroke="#d8d010" stroke-width="1.9" transform="rotate(12 10.7 12.5)"/><ellipse cx="19.3" cy="12.5" rx="1.7" ry="4" fill="none" stroke="#1a50d0" stroke-width="1.5" transform="rotate(8 19.3 12.5)"/></svg>
<div style="position:absolute;left:26px;top:340px;width:26px;height:25px;background:linear-gradient(180deg,#f8f8f8,#e9e9e9 60%,#dcdcdc);border:1.5px solid #a0a0a0;border-radius:4px;box-sizing:border-box;"></div>
<svg style="position:absolute;left:25px;top:369px;" width="27" height="27" viewBox="0 0 27 27"><circle cx="13.5" cy="13.5" r="12.5" fill="#fff" stroke="#3a8a3a" stroke-width="1.2"/><path d="M9.5 6.5 L20 13.5 L9.5 20.5 Z" fill="#3a8a3a"/></svg>
<div style="position:absolute;left:186px;top:109px;width:769px;height:1px;background:#8c8c8c;"></div>
<div style="position:absolute;left:186px;top:85px;width:384px;height:25px;background:#fff;border:1px solid #8d929a;border-bottom:none;box-sizing:border-box;"></div>
<svg style="position:absolute;left:194px;top:86px;" width="22" height="20" viewBox="0 0 22 20"><g transform="scale(1.0)"><path d="M15 6.5 L14.5 8 M16.2 14 L17 15" stroke="#1a3a90" stroke-width="1.2"/><circle cx="7.3" cy="13.5" r="1.9000000000000001" fill="none" stroke="#1f55d0" stroke-width="1.6"/><circle cx="7.3" cy="13.5" r="3.3000000000000003" fill="none" stroke="#1f55d0" stroke-width="1.2" stroke-dasharray="1.30 1.30"/><circle cx="13.8" cy="11.5" r="2.6" fill="none" stroke="#1238a8" stroke-width="2.0"/><circle cx="13.8" cy="11.5" r="4.2" fill="none" stroke="#1238a8" stroke-width="1.2" stroke-dasharray="1.47 1.47"/><circle cx="13.8" cy="11.5" r="2.2" fill="#fff" stroke="#a8b8e8" stroke-width="1.2"/><circle cx="15.4" cy="4.6" r="1.8" fill="none" stroke="#8898c8" stroke-width="1.3"/><circle cx="18" cy="15.7" r="1.7" fill="none" stroke="#1a3aa0" stroke-width="1.3"/></g></svg>
<div class="t s" style="left:306px;top:92px;font-size:12px;line-height:12px;color:#000;transform:scaleX(0.9045);">DoublePendulum_interactive*</div>
<svg style="position:absolute;left:542px;top:90px;" width="14" height="14" viewBox="0 0 14 14"><rect x="0.8" y="0.8" width="12.4" height="12.4" rx="2" fill="#e8804a" stroke="#d83a20" stroke-width="1.4"/><path d="M4 4 L10 10 M10 4 L4 10" stroke="#fff" stroke-width="2"/></svg>
<div style="position:absolute;left:186px;top:109px;width:768px;height:27px;background:#d4d4d4;border:1px solid #8c8c8c;border-width:1px 1px 1px 1px;box-sizing:border-box;"></div>
<div style="position:absolute;left:186px;top:136px;width:769px;height:4px;background:#f0f0f0;"></div>
<svg style="position:absolute;left:191px;top:116px;" width="18" height="14" viewBox="0 0 18 14"><rect x="4.5" y="0" width="9" height="14" fill="#1e50c8"/><rect x="0" y="3.5" width="2" height="7" fill="#000"/><rect x="16" y="3.5" width="2" height="7" fill="#000"/><rect x="0" y="6" width="18" height="2" fill="#000"/></svg>
<div style="position:absolute;left:211px;top:113px;width:23px;height:20px;border:1px solid #6a6a6a;border-radius:3px;box-sizing:border-box;background:linear-gradient(180deg,#c4c4c4,#d8d8d8);"></div>
<svg style="position:absolute;left:211px;top:113px;" width="21" height="19" viewBox="0 0 21 19"><g transform="scale(0.95)"><path d="M15 6.5 L14.5 8 M16.2 14 L17 15" stroke="#1a3a90" stroke-width="1.2"/><circle cx="7.3" cy="13.5" r="1.9000000000000001" fill="none" stroke="#1f55d0" stroke-width="1.6"/><circle cx="7.3" cy="13.5" r="3.3000000000000003" fill="none" stroke="#1f55d0" stroke-width="1.2" stroke-dasharray="1.30 1.30"/><circle cx="13.8" cy="11.5" r="2.6" fill="none" stroke="#1238a8" stroke-width="2.0"/><circle cx="13.8" cy="11.5" r="4.2" fill="none" stroke="#1238a8" stroke-width="1.2" stroke-dasharray="1.47 1.47"/><circle cx="13.8" cy="11.5" r="2.2" fill="#fff" stroke="#a8b8e8" stroke-width="1.2"/><circle cx="15.4" cy="4.6" r="1.8" fill="none" stroke="#8898c8" stroke-width="1.3"/><circle cx="18" cy="15.7" r="1.7" fill="none" stroke="#1a3aa0" stroke-width="1.3"/></g></svg>
<svg style="position:absolute;left:237px;top:115px;" width="16" height="16" viewBox="0 0 16 16"><rect x="0.5" y="0.5" width="15" height="15" fill="#2a4aa8"/><path d="M3 4 H13 M5 6.8 H13 M3 9.6 H13 M3 12.4 H13" stroke="#fff" stroke-width="1.3"/></svg>
<svg style="position:absolute;left:260px;top:115px;" width="16" height="16" viewBox="0 0 16 16"><circle cx="8" cy="8" r="7.8" fill="#2448b8"/><rect x="6.8" y="6.5" width="2.6" height="6.5" fill="#fff"/><circle cx="8" cy="4" r="1.5" fill="#fff"/></svg>
<div style="position:absolute;left:284px;top:110px;width:1px;height:25px;background:#8c8c8c;"></div>
<div style="position:absolute;left:337px;top:110px;width:1px;height:25px;background:#8c8c8c;"></div>
<div style="position:absolute;left:378px;top:110px;width:1px;height:25px;background:#8c8c8c;"></div>
<div style="position:absolute;left:455px;top:110px;width:1px;height:25px;background:#8c8c8c;"></div>
<div style="position:absolute;left:604px;top:110px;width:1px;height:25px;background:#8c8c8c;"></div>
<div style="position:absolute;left:929px;top:110px;width:1px;height:25px;background:#8c8c8c;"></div>
<div class="t s" style="left:290px;top:117px;font-size:12px;line-height:12px;color:#000;transform:scaleX(0.9134);">Writable</div>
<div class="t s" style="left:343px;top:117px;font-size:12px;line-height:12px;color:#000;transform:scaleX(0.8873);">Model</div>
<div class="t s" style="left:384px;top:117px;font-size:12px;line-height:12px;color:#000;transform:scaleX(0.8593);">Diagram View</div>
<div class="t s" style="left:461px;top:117px;font-size:12px;line-height:12px;color:#000;transform:scaleX(0.8864);">DoublePendulum_interactive</div>
<div class="t s" style="left:610px;top:117px;font-size:12px;line-height:12px;color:#000;transform:scaleX(0.8692);">D:/Programming/OPENMODELICA...ublePendulum_interactive.mo</div>
<svg style="position:absolute;left:936px;top:116px;" width="12" height="14" viewBox="0 0 12 14"><path d="M3.5 6 V3.5 Q3.5 0.8 6.5 0.8 Q8.5 0.8 9 2.5" stroke="#a8a8a8" stroke-width="1.6" fill="none"/><rect x="1" y="6" width="10" height="8" rx="1.5" fill="#a8a8a8"/></svg>
<div style="position:absolute;left:186px;top:140px;width:768px;height:650px;background:#f1f1f1;border:1px solid #828790;box-sizing:border-box;"></div>
<div style="position:absolute;left:937px;top:141px;width:16px;height:632px;background:linear-gradient(90deg,#e6e6e6,#f0f0f0 30%,#f0f0f0);"></div>
<svg style="position:absolute;left:942px;top:148px;" width="7" height="4" viewBox="0 0 7 4"><path d="M0 4 L3.5 0 L7 4 Z" fill="#303030"/></svg>
<div style="position:absolute;left:937px;top:248px;width:15px;height:418px;border:1px solid #8a8a8a;border-radius:2px;box-sizing:border-box;background:linear-gradient(90deg,#f6f6f6 0,#f1f1f1 40%,#d6d6d8 45%,#c6c6ca 100%);"></div>
<div style="position:absolute;left:941px;top:453px;width:7px;height:1px;background:#555;"></div>
<div style="position:absolute;left:941px;top:456px;width:7px;height:1px;background:#555;"></div>
<div style="position:absolute;left:941px;top:459px;width:7px;height:1px;background:#555;"></div>
<svg style="position:absolute;left:942px;top:762px;" width="7" height="4" viewBox="0 0 7 4"><path d="M0 0 L3.5 4 L7 0 Z" fill="#303030"/></svg>
<div style="position:absolute;left:187px;top:772px;width:750px;height:16px;background:linear-gradient(180deg,#e6e6e6,#f0f0f0 30%,#f0f0f0);"></div>
<svg style="position:absolute;left:193px;top:777px;" width="4" height="7" viewBox="0 0 4 7"><path d="M4 0 L0 3.5 L4 7 Z" fill="#303030"/></svg>
<svg style="position:absolute;left:926px;top:777px;" width="4" height="7" viewBox="0 0 4 7"><path d="M0 0 L4 3.5 L0 7 Z" fill="#303030"/></svg>
<div style="position:absolute;left:264px;top:773px;width:595px;height:15px;border:1px solid #8a8a8a;border-radius:2px;box-sizing:border-box;background:linear-gradient(180deg,#f6f6f6 0,#f1f1f1 40%,#d6d6d8 45%,#c6c6ca 100%);"></div>
<div style="position:absolute;left:558px;top:777px;width:1px;height:7px;background:#444;"></div>
<div style="position:absolute;left:561px;top:777px;width:1px;height:7px;background:#444;"></div>
<div style="position:absolute;left:564px;top:777px;width:1px;height:7px;background:#444;"></div>
<div style="position:absolute;left:262px;top:157px;width:598px;height:598px;background:#fff;border:1px solid #c0c0c0;box-sizing:border-box;"></div>
<div style="position:absolute;left:581px;top:793px;width:1px;height:24px;background:#d8d8d8;"></div>
<div style="position:absolute;left:935px;top:793px;width:1px;height:24px;background:#d8d8d8;"></div>
<div style="position:absolute;left:588px;top:814px;width:344px;height:1px;background:#8d929a;"></div>
<div style="position:absolute;left:588px;top:793px;width:85px;height:22px;background:linear-gradient(180deg,#d2d2d2 0,#d6d6d6 50%,#ececec 60%,#f0f0f0 100%);border:1px solid #8d929a;box-sizing:border-box;"></div>
<div style="position:absolute;left:672px;top:790px;width:89px;height:28px;background:#fff;border:1px solid #8d929a;border-bottom:none;box-sizing:border-box;"></div>
<div style="position:absolute;left:760px;top:793px;width:80px;height:22px;background:linear-gradient(180deg,#d2d2d2 0,#d6d6d6 50%,#ececec 60%,#f0f0f0 100%);border:1px solid #8d929a;box-sizing:border-box;"></div>
<div style="position:absolute;left:839px;top:793px;width:93px;height:22px;background:linear-gradient(180deg,#d2d2d2 0,#d6d6d6 50%,#ececec 60%,#f0f0f0 100%);border:1px solid #8d929a;box-sizing:border-box;"></div>
<div class="t s" style="left:618px;top:799px;font-size:12px;line-height:12px;color:#000;transform:scaleX(0.8435);">Welcome</div>
<div class="t s" style="left:704px;top:800px;font-size:12px;line-height:12px;color:#000;transform:scaleX(0.8624);">Modeling</div>
<div class="t s" style="left:790px;top:799px;font-size:12px;line-height:12px;color:#000;transform:scaleX(0.8994);">Plotting</div>
<div class="t s" style="left:870px;top:799px;font-size:12px;line-height:12px;color:#000;transform:scaleX(0.8785);">Debugging</div>
<svg style="position:absolute;left:596px;top:794px;" width="20" height="18" viewBox="0 0 20 18"><ellipse cx="11" cy="14" rx="7.5" ry="2.6" fill="#3a3d3a"/><ellipse cx="6.7" cy="8.2" rx="4.6" ry="7" fill="#4a4d4a" stroke="#2a2d2a" stroke-width="1" stroke-dasharray="1 1"/><path d="M10 5.5 L17 2" stroke="#303330" stroke-width="2.4" stroke-linecap="round"/><path d="M5 7 L8 6.5" stroke="#ddd" stroke-width="1"/></svg>
<svg style="position:absolute;left:681px;top:795px;" width="22" height="20" viewBox="0 0 22 20"><g transform="scale(1.0)"><path d="M15 6.5 L14.5 8 M16.2 14 L17 15" stroke="#1a3a90" stroke-width="1.2"/><circle cx="7.3" cy="13.5" r="1.9000000000000001" fill="none" stroke="#1f55d0" stroke-width="1.6"/><circle cx="7.3" cy="13.5" r="3.3000000000000003" fill="none" stroke="#1f55d0" stroke-width="1.2" stroke-dasharray="1.30 1.30"/><circle cx="13.8" cy="11.5" r="2.6" fill="none" stroke="#1238a8" stroke-width="2.0"/><circle cx="13.8" cy="11.5" r="4.2" fill="none" stroke="#1238a8" stroke-width="1.2" stroke-dasharray="1.47 1.47"/><circle cx="13.8" cy="11.5" r="2.2" fill="#fff" stroke="#a8b8e8" stroke-width="1.2"/><circle cx="15.4" cy="4.6" r="1.8" fill="none" stroke="#8898c8" stroke-width="1.3"/><circle cx="18" cy="15.7" r="1.7" fill="none" stroke="#1a3aa0" stroke-width="1.3"/></g></svg>
<svg style="position:absolute;left:771px;top:795px;" width="16" height="16" viewBox="0 0 16 16"><defs><linearGradient id="pl1" x1="0" y1="0" x2="0" y2="1"><stop offset="0" stop-color="#0a50f8"/><stop offset="0.28" stop-color="#0a50f8"/><stop offset="0.3" stop-color="#6ab0e8"/><stop offset="0.6" stop-color="#4a90d8"/><stop offset="0.65" stop-color="#1a50c0"/><stop offset="1" stop-color="#1a48b8"/></linearGradient></defs><rect x="0" y="0" width="15" height="15" rx="2.5" fill="url(#pl1)"/><path d="M1 6.5 Q3 8 5 6.5 T9 6 T14 7" stroke="#0a60c0" stroke-width="1" fill="none"/><path d="M2 11.5 H13" stroke="#e0ecff" stroke-width="1.6" stroke-dasharray="2 0.6"/></svg>
<svg style="position:absolute;left:850px;top:794px;" width="18" height="19" viewBox="0 0 18 19"><path d="M1.5 4 L6 9 M12 10 L16.5 14.5" stroke="#c8c8c8" stroke-width="2.5" stroke-dasharray="1.2 0.8"/><circle cx="7.6" cy="10.3" r="6" fill="#f01010" stroke="#b00000" stroke-width="0.5"/><circle cx="14" cy="4.2" r="2.6" fill="#111"/><circle cx="6" cy="7.3" r="1.4" fill="#000"/><circle cx="11.4" cy="9.8" r="1.6" fill="#000"/><circle cx="3.5" cy="10.6" r="1" fill="#000"/><circle cx="6.6" cy="13.7" r="1.3" fill="#000"/><circle cx="10" cy="13.5" r="1" fill="#000"/><circle cx="9.6" cy="6.5" r="0.8" fill="#000"/></svg>
<svg style="position:absolute;left:944px;top:809px;" width="9" height="9" viewBox="0 0 9 9"><rect x="7" y="0" width="1.5" height="1.5" fill="#b0b0b0"/><rect x="4" y="3" width="1.5" height="1.5" fill="#b0b0b0"/><rect x="7" y="3" width="1.5" height="1.5" fill="#b0b0b0"/><rect x="1" y="6" width="1.5" height="1.5" fill="#b0b0b0"/><rect x="4" y="6" width="1.5" height="1.5" fill="#b0b0b0"/><rect x="7" y="6" width="1.5" height="1.5" fill="#b0b0b0"/></svg>
<svg style="position:absolute;left:0px;top:0px;pointer-events:none;" width="963" height="826" viewBox="0 0 963 826"><polyline points="528,270.5 619.5,270.5 619.5,312.5 651,312.5" fill="none" stroke="#00007f" stroke-width="1" /><polyline points="528,348.5 651,348.5" fill="none" stroke="#00007f" stroke-width="1" /><polyline points="729,330.5 787.5,330.5 787.5,432.5 381.5,432.5 381.5,587.5 400,587.5" fill="none" stroke="#00007f" stroke-width="1" /><polyline points="331,266.5 448,266.5" fill="none" stroke="#ff00ff" stroke-width="1" /><polyline points="292.5,271 292.5,345.5 448,345.5" fill="none" stroke="#ff00ff" stroke-width="1" /><polyline points="474.5,587.5 489.5,587.5 489.5,692" fill="none" stroke="#008000" stroke-width="1" /><polyline points="390,712.5 434,712.5" fill="none" stroke="#505050" stroke-width="1.6" /><polyline points="497,712.5 541,712.5" fill="none" stroke="#505050" stroke-width="1.6" /><polyline points="605,712.5 625,712.5" fill="none" stroke="#505050" stroke-width="1.6" /><polyline points="688,712.5 708,712.5" fill="none" stroke="#505050" stroke-width="1.6" /><polyline points="772,712.5 786,712.5" fill="none" stroke="#505050" stroke-width="1.6" /><rect x="280.5" y="205" width="60" height="60" rx="7" ry="7" fill="#fff" stroke="#1a3d6e" stroke-width="2.2"/><rect x="302" y="218" width="16.5" height="15.6" fill="#9a9a9a"/><polygon points="302,233.6 318.5,233.6 315.5,229.6 305,229.6" fill="#5a5a5a"/><polygon points="302,218 305,219 305,229.6 302,233.6" fill="#c8c8c8"/><polygon points="318.5,218 315.5,219 315.5,229.6 318.5,233.6" fill="#808080"/><rect x="305" y="219" width="10.5" height="10.6" fill="#d6d6d6"/><rect x="285" y="233.6" width="17" height="17.2" fill="#9a9a9a"/><polygon points="285,250.79999999999998 302,250.79999999999998 299,246.79999999999998 288,246.79999999999998" fill="#5a5a5a"/><polygon points="285,233.6 288,234.6 288,246.79999999999998 285,250.79999999999998" fill="#c8c8c8"/><polygon points="302,233.6 299,234.6 299,246.79999999999998 302,250.79999999999998" fill="#808080"/><rect x="288" y="234.6" width="11" height="12.2" fill="#d6d6d6"/><rect x="302" y="233.6" width="16.5" height="17.2" fill="#9a9a9a"/><polygon points="302,250.79999999999998 318.5,250.79999999999998 315.5,246.79999999999998 305,246.79999999999998" fill="#5a5a5a"/><polygon points="302,233.6 305,234.6 305,246.79999999999998 302,250.79999999999998" fill="#c8c8c8"/><polygon points="318.5,233.6 315.5,234.6 315.5,246.79999999999998 318.5,250.79999999999998" fill="#808080"/><rect x="305" y="234.6" width="10.5" height="12.2" fill="#d6d6d6"/><rect x="318.5" y="233.6" width="16.5" height="17.2" fill="#9a9a9a"/><polygon points="318.5,250.79999999999998 335.0,250.79999999999998 332.0,246.79999999999998 321.5,246.79999999999998" fill="#5a5a5a"/><polygon points="318.5,233.6 321.5,234.6 321.5,246.79999999999998 318.5,250.79999999999998" fill="#c8c8c8"/><polygon points="335.0,233.6 332.0,234.6 332.0,246.79999999999998 335.0,250.79999999999998" fill="#808080"/><rect x="321.5" y="234.6" width="10.5" height="12.2" fill="#d6d6d6"/><polyline points="310.5,221 310.5,228" fill="none" stroke="#404040" stroke-width="1.2" /><polyline points="308.5,223 310.5,221 312.5,223" fill="none" stroke="#404040" stroke-width="1" /><polyline points="310.5,238 310.5,245" fill="none" stroke="#404040" stroke-width="1.2" /><polyline points="289,241.5 298,241.5" fill="none" stroke="#404040" stroke-width="1.2" /><polyline points="322,241.5 331,241.5" fill="none" stroke="#404040" stroke-width="1.2" /><polyline points="310,217.5 341,217.5" fill="none" stroke="#ff00ff" stroke-width="1" /><polygon points="341.3,214.3 346.5,217.5 341.3,220.7" fill="#fff" stroke="#ff00ff" stroke-width="1.1" stroke-linejoin="miter"/><polygon points="341.3,231.8 346.5,235 341.3,238.2" fill="#fff" stroke="#ff00ff" stroke-width="1.1" stroke-linejoin="miter"/><polygon points="341.3,249.8 346.5,253 341.3,256.2" fill="#fff" stroke="#ff00ff" stroke-width="1.1" stroke-linejoin="miter"/><polyline points="292.5,252 292.5,265" fill="none" stroke="#ff00ff" stroke-width="1" /><polygon points="289.0,265 296.0,265 292.5,271" fill="#fff" stroke="#ff00ff" stroke-width="1.2" stroke-linejoin="miter"/><polyline points="310.5,252 310.5,265" fill="none" stroke="#ff00ff" stroke-width="1" /><polygon points="307.0,265 314.0,265 310.5,271" fill="#fff" stroke="#ff00ff" stroke-width="1.2" stroke-linejoin="miter"/><polyline points="328.5,252 328.5,265" fill="none" stroke="#ff00ff" stroke-width="1" /><polygon points="325.0,265 332.0,265 328.5,271" fill="#fff" stroke="#ff00ff" stroke-width="1.2" stroke-linejoin="miter"/><rect x="457" y="238" width="65" height="65" fill="#000"/><rect x="462" y="244" width="54.5" height="54" fill="#d2d2d2"/><polyline points="465.5,250 465.5,295" fill="none" stroke="#a8a8a8" stroke-width="1" /><polygon points="463.5,252 465.5,246 467.5,252" fill="#b0b0b0" stroke="#b0b0b0" stroke-width="0.5" stroke-linejoin="miter"/><polyline points="464,291.5 511,291.5" fill="none" stroke="#a8a8a8" stroke-width="1" /><polygon points="510,289 516.5,291.5 510,294" fill="#b0b0b0" stroke="#b0b0b0" stroke-width="0.5" stroke-linejoin="miter"/><polyline points="465,291.5 471.5,291.5 471.5,263.5 491.5,263.5 491.5,291.5 507.5,291.5" fill="none" stroke="#ff00ff" stroke-width="1" /><polyline points="471.5,291.5 480.5,258.5 492,258.5 501,291.5" fill="none" stroke="#00007f" stroke-width="1" /><polygon points="447.5,265 460,270.8 447.5,276.5" fill="#ff00ff" stroke="#ff00ff" stroke-width="0.8" stroke-linejoin="miter"/><polygon points="522.5,267 528,270.5 522.5,274" fill="#fff" stroke="#00007f" stroke-width="1" stroke-linejoin="miter"/><rect x="457" y="316" width="65" height="65" fill="#000"/><rect x="462" y="322" width="54.5" height="54" fill="#d2d2d2"/><polyline points="465.5,328 465.5,373" fill="none" stroke="#a8a8a8" stroke-width="1" /><polygon points="463.5,330 465.5,324 467.5,330" fill="#b0b0b0" stroke="#b0b0b0" stroke-width="0.5" stroke-linejoin="miter"/><polyline points="464,369.5 511,369.5" fill="none" stroke="#a8a8a8" stroke-width="1" /><polygon points="510,367 516.5,369.5 510,372" fill="#b0b0b0" stroke="#b0b0b0" stroke-width="0.5" stroke-linejoin="miter"/><polyline points="465,369.5 471.5,369.5 471.5,341.5 491.5,341.5 491.5,369.5 507.5,369.5" fill="none" stroke="#ff00ff" stroke-width="1" /><polyline points="471.5,369.5 480.5,336.5 492,336.5 501,369.5" fill="none" stroke="#00007f" stroke-width="1" /><polygon points="447.5,343 460,348.8 447.5,354.5" fill="#ff00ff" stroke="#ff00ff" stroke-width="0.8" stroke-linejoin="miter"/><polygon points="522.5,345 528,348.5 522.5,352" fill="#fff" stroke="#00007f" stroke-width="1" stroke-linejoin="miter"/><rect x="662.5" y="300.5" width="60" height="60" fill="#fff" stroke="#00007f" stroke-width="1"/><circle cx="692" cy="330.5" r="14.5" fill="none" stroke="#00007f" stroke-width="1"/><polyline points="662.5,312.5 670.5,323.5 678.5,323.5" fill="none" stroke="#00007f" stroke-width="1" /><polyline points="662.5,348.5 670.5,338.5 678.5,338.5" fill="none" stroke="#00007f" stroke-width="1" /><polyline points="706.5,330.5 723,330.5" fill="none" stroke="#00007f" stroke-width="1" /><polygon points="650.5,307 662.5,312.8 650.5,318.5" fill="#00007f" stroke="#00007f" stroke-width="0.8" stroke-linejoin="miter"/><polygon points="650.5,343 662.5,348.8 650.5,354.5" fill="#00007f" stroke="#00007f" stroke-width="0.8" stroke-linejoin="miter"/><polygon points="723,327 729,330.5 723,334" fill="#fff" stroke="#00007f" stroke-width="1" stroke-linejoin="miter"/><polyline points="687.5,331.5 697,331.5" fill="none" stroke="#000" stroke-width="1.1" /><polyline points="692.2,327 692.2,336" fill="none" stroke="#000" stroke-width="1.1" /><rect x="411.5" y="581.5" width="60" height="12" fill="#d3d3d3" stroke="#008000" stroke-width="1"/><rect x="468.5" y="584.5" width="6" height="6" fill="#fff" stroke="#008000" stroke-width="1"/><polygon points="399.5,581.5 411.5,587.5 399.5,593.5" fill="#00007f" stroke="#00007f" stroke-width="0.8" stroke-linejoin="miter"/><polyline points="432,577.5 451,577.5" fill="none" stroke="#000" stroke-width="1" /><polyline points="441.5,571 441.5,577.5" fill="none" stroke="#000" stroke-width="1" /><polyline points="432,595.5 451,595.5" fill="none" stroke="#000" stroke-width="1" /><polyline points="436.5,596 432.5,604" fill="none" stroke="#000" stroke-width="0.9" /><polyline points="439.8,596 435.8,604" fill="none" stroke="#000" stroke-width="0.9" /><polyline points="443.1,596 439.1,604" fill="none" stroke="#000" stroke-width="0.9" /><polyline points="446.4,596 442.4,604" fill="none" stroke="#000" stroke-width="0.9" /><polyline points="449.7,596 445.7,604" fill="none" stroke="#000" stroke-width="0.9" /><polyline points="453.0,596 449.0,604" fill="none" stroke="#000" stroke-width="0.9" /><polyline points="441.5,596 441.5,613" fill="none" stroke="#000" stroke-width="1" /><polyline points="426,621.5 451,621.5" fill="none" stroke="#000" stroke-width="0" /><polyline points="433.0,617 427.0,624" fill="none" stroke="#000" stroke-width="0.9" /><polyline points="438.5,617 432.5,624" fill="none" stroke="#000" stroke-width="0.9" /><polyline points="444.0,617 438.0,624" fill="none" stroke="#000" stroke-width="0.9" /><polyline points="449.5,617 443.5,624" fill="none" stroke="#000" stroke-width="0.9" /><polyline points="455.0,617 449.0,624" fill="none" stroke="#000" stroke-width="0.9" /><rect x="438" y="613.5" width="7.5" height="7.5" fill="#008000" stroke="#8a8a8a" stroke-width="1"/><rect x="555.5" y="584.5" width="26" height="18" fill="#c0c0c0" stroke="#2a2a2a" stroke-width="1"/><polyline points="581.5,584.5 591,584.5" fill="none" stroke="#2a2a2a" stroke-width="1" /><polyline points="581.5,602.5 591,602.5" fill="none" stroke="#2a2a2a" stroke-width="1" /><polyline points="513.5,593.5 555.5,593.5" fill="none" stroke="#2a2a2a" stroke-width="1" /><polyline points="581.5,593.5 614.5,593.5" fill="none" stroke="#2a2a2a" stroke-width="1" /><polyline points="513.5,593.5 513.5,659.5 555.5,659.5 555.5,680" fill="none" stroke="#2a2a2a" stroke-width="1" /><polyline points="614.5,593.5 614.5,659.5 572.5,659.5 572.5,680" fill="none" stroke="#2a2a2a" stroke-width="1" /><circle cx="542.8" cy="593.5" r="3" fill="#585858" stroke="#2a2a2a" stroke-width="1"/><circle cx="602.6" cy="593.5" r="3" fill="#fff" stroke="#2a2a2a" stroke-width="1"/><circle cx="555.5" cy="683" r="3" fill="#fff" stroke="#2a2a2a" stroke-width="1"/><circle cx="572.5" cy="683" r="3" fill="#585858" stroke="#2a2a2a" stroke-width="1"/><rect x="540" y="620" width="7" height="7" fill="#c00000"/><rect x="710.5" y="596.5" width="27" height="18" fill="#c0c0c0" stroke="#2a2a2a" stroke-width="1"/><polyline points="737.5,596.5 747,596.5" fill="none" stroke="#2a2a2a" stroke-width="1" /><polyline points="737.5,614.5 747,614.5" fill="none" stroke="#2a2a2a" stroke-width="1" /><polyline points="698.4,605.5 710.5,605.5" fill="none" stroke="#2a2a2a" stroke-width="1" /><polyline points="737.5,605.5 758.5,605.5" fill="none" stroke="#2a2a2a" stroke-width="1" /><polyline points="713.5,614.5 713.5,682.5 720,682.5" fill="none" stroke="#2a2a2a" stroke-width="1" /><polyline points="758.5,608 758.5,647.5 740.5,647.5 740.5,680" fill="none" stroke="#2a2a2a" stroke-width="1" /><circle cx="698.4" cy="605.5" r="3" fill="#585858" stroke="#2a2a2a" stroke-width="1"/><circle cx="758.5" cy="605.5" r="3" fill="#fff" stroke="#2a2a2a" stroke-width="1"/><circle cx="722.5" cy="683" r="3" fill="#fff" stroke="#2a2a2a" stroke-width="1"/><circle cx="740.5" cy="683" r="3" fill="#585858" stroke="#2a2a2a" stroke-width="1"/><rect x="695" y="632.5" width="7" height="7" fill="#c00000"/><polyline points="328,682.5 387.5,682.5 387.5,742.5" fill="none" stroke="#000" stroke-width="1" /><polyline points="328,748 328,692" fill="none" stroke="#000" stroke-width="2.6" /><polygon points="322,694 328,682 334,694" fill="#000" stroke="#000" stroke-width="0.5" stroke-linejoin="miter"/><polyline points="321.5,742.5 377,742.5" fill="none" stroke="#000" stroke-width="2.6" /><polygon points="376,736.5 388.5,742.5 376,748.5" fill="#000" stroke="#000" stroke-width="0.5" stroke-linejoin="miter"/><polyline points="341.3,689 341.3,722" fill="none" stroke="#0000ff" stroke-width="1.4" /><polygon points="337.3,720 345.3,720 341.3,733" fill="#0000ff" stroke="#0000ff" stroke-width="0.5" stroke-linejoin="miter"/><polyline points="358.5,689 358.5,722" fill="none" stroke="#0000ff" stroke-width="1.4" /><polygon points="354.5,720 362.5,720 358.5,733" fill="#0000ff" stroke="#0000ff" stroke-width="0.5" stroke-linejoin="miter"/><polyline points="377.5,689 377.5,722" fill="none" stroke="#0000ff" stroke-width="1.4" /><polygon points="373.5,720 381.5,720 377.5,733" fill="#0000ff" stroke="#0000ff" stroke-width="0.5" stroke-linejoin="miter"/><rect x="386.5" y="707.5" width="3" height="10" fill="#fff" stroke="#000" stroke-width="1"/><rect x="436" y="698" width="20.5" height="30" fill="#c0c0c0"/><rect x="436" y="698" width="20.5" height="3" fill="#000"/><rect x="456.5" y="704" width="38.5" height="18" fill="#c0c0c0"/><rect x="456.5" y="704" width="38.5" height="3" fill="#000"/><polyline points="456.5,698 456.5,728" fill="none" stroke="#000" stroke-width="1.2" /><polyline points="495.5,704 495.5,722" fill="none" stroke="#000" stroke-width="1" /><rect x="434.5" y="707.5" width="3" height="10" fill="#fff" stroke="#000" stroke-width="1"/><rect x="493.5" y="707.5" width="3" height="10" fill="#fff" stroke="#000" stroke-width="1"/><rect x="450.5" y="691.5" width="6" height="6" fill="#fff" stroke="#008000" stroke-width="1"/><rect x="486" y="691" width="7" height="7" fill="#008000"/><defs><linearGradient id="cyl" x1="0" y1="0" x2="0" y2="1"><stop offset="0" stop-color="#404040"/><stop offset="0.5" stop-color="#ffffff"/><stop offset="1" stop-color="#404040"/></linearGradient></defs><rect x="543" y="694" width="20.7" height="37" rx="3.5" fill="url(#cyl)" stroke="#303030" stroke-width="1"/><rect x="563.7" y="709.6" width="17.5" height="5.7" fill="#c0c0c0" stroke="#505050" stroke-width="1"/><rect x="581.2" y="694" width="21.6" height="37" rx="3.5" fill="url(#cyl)" stroke="#303030" stroke-width="1"/><rect x="541.5" y="707.5" width="3" height="10" fill="#ddd" stroke="#000" stroke-width="1"/><rect x="601.3000000000001" y="707.5" width="3" height="10" fill="#fff" stroke="#000" stroke-width="1"/><rect x="710.3" y="694" width="21.6" height="37" rx="3.5" fill="url(#cyl)" stroke="#303030" stroke-width="1"/><rect x="731.9" y="709.6" width="17.2" height="5.7" fill="#c0c0c0" stroke="#505050" stroke-width="1"/><rect x="749.1" y="694" width="21.8" height="37" rx="3.5" fill="url(#cyl)" stroke="#303030" stroke-width="1"/><rect x="708.8" y="707.5" width="3" height="10" fill="#ddd" stroke="#000" stroke-width="1"/><rect x="769.4" y="707.5" width="3" height="10" fill="#fff" stroke="#000" stroke-width="1"/><rect x="627" y="704.4" width="56" height="20.6" fill="#0a80f8"/><polygon points="627,704.4 630.5,700 686.5,700 683,704.4" fill="#0066cc"/><polygon points="683,704.4 686.5,700 686.5,721 683,725" fill="#005ab8"/><rect x="625.5" y="707.5" width="3" height="10" fill="#ddd" stroke="#000" stroke-width="1"/><rect x="684.5" y="707.5" width="3" height="10" fill="#fff" stroke="#000" stroke-width="1"/><rect x="788" y="704.4" width="56" height="20.6" fill="#0a80f8"/><polygon points="788,704.4 791.5,700 847.5,700 844,704.4" fill="#0066cc"/><polygon points="844,704.4 847.5,700 847.5,721 844,725" fill="#005ab8"/><rect x="786.5" y="707.5" width="3" height="10" fill="#ddd" stroke="#000" stroke-width="1"/><rect x="845.5" y="707.5" width="3" height="10" fill="#fff" stroke="#000" stroke-width="1"/></svg>
<div class="t" style="left:274px;top:195px;font-size:9px;line-height:9px;color:#000;transform:scaleX(1.1282);">keyboardInput1</div>
<div class="t" style="left:444px;top:228px;font-size:9px;line-height:9px;color:#0000ff;transform:scaleX(1.1033);">triggeredTrapezoid1</div>
<div class="t" style="left:444px;top:306px;font-size:9px;line-height:9px;color:#0000ff;transform:scaleX(1.1033);">triggeredTrapezoid2</div>
<div class="t" style="left:681px;top:289px;font-size:9px;line-height:9px;color:#0000ff;transform:scaleX(1.0488);">add1</div>
<div class="t" style="left:671px;top:306px;font-size:9px;line-height:9px;color:#000;transform:scaleX(1.2182);">+1</div>
<div class="t" style="left:671px;top:349px;font-size:9px;line-height:9px;color:#000;transform:scaleX(1.2182);">+1</div>
<div class="t" style="left:421px;top:561px;font-size:9px;line-height:9px;color:#0000ff;transform:scaleX(1.1103);">position1</div>
<div class="t" style="left:398px;top:600px;font-size:7px;line-height:7px;color:#000;transform:scaleX(1.0924);">v_ref</div>
<div class="t" style="left:457px;top:599px;font-size:7px;line-height:7px;color:#000;transform:scaleX(1.0087);">exact=</div>
<div class="t" style="left:458px;top:610px;font-size:7px;line-height:7px;color:#000;transform:scaleX(1.0144);">false</div>
<div class="t" style="left:555px;top:572px;font-size:9px;line-height:9px;color:#0000ff;transform:scaleX(1.1469);">damper</div>
<div class="t" style="left:563px;top:611px;font-size:9px;line-height:9px;color:#000;transform:scaleX(1.1790);">d=1</div>
<div class="t" style="left:708px;top:584px;font-size:9px;line-height:9px;color:#0000ff;transform:scaleX(1.0979);">damper1</div>
<div class="t" style="left:718px;top:623px;font-size:9px;line-height:9px;color:#000;transform:scaleX(1.1790);">d=1</div>
<div class="t" style="left:345px;top:671px;font-size:9px;line-height:9px;color:#0000ff;transform:scaleX(1.1391);">world</div>
<div class="t s" style="left:311px;top:678px;font-size:12px;line-height:12px;color:#000;transform:scaleX(1.0000);">y</div>
<div class="t s" style="left:390px;top:749px;font-size:12px;line-height:12px;color:#000;transform:scaleX(1.1667);">x</div>
<div class="t" style="left:446px;top:732px;font-size:7px;line-height:7px;color:#000;transform:scaleX(1.1832);">n={1, 0, 0}</div>
<div class="t" style="left:553px;top:738px;font-size:7px;line-height:7px;color:#000;transform:scaleX(1.1988);">n={0, 0, 1}</div>
<div class="t" style="left:720px;top:738px;font-size:7px;line-height:7px;color:#000;transform:scaleX(1.1988);">n={0, 0, 1}</div>
<div class="t" style="left:635px;top:688px;font-size:9px;line-height:9px;color:#0000ff;transform:scaleX(1.0492);">boxBody1</div>
<div class="t" style="left:795px;top:688px;font-size:9px;line-height:9px;color:#0000ff;transform:scaleX(1.0742);">boxBody2</div>
<div class="t" style="left:634px;top:729px;font-size:7px;line-height:7px;color:#000;transform:scaleX(1.1816);">r={0.5, 0, 0}</div>
<div class="t" style="left:795px;top:729px;font-size:7px;line-height:7px;color:#000;transform:scaleX(1.3538);">r={0.5,0,0}</div>
<div class="t" style="left:341px;top:240px;font-size:7px;line-height:7px;color:#707070;transform:scaleX(0.9296);">return</div>
<div class="t" style="left:341px;top:257px;font-size:7px;line-height:7px;color:#707070;transform:scaleX(0.8565);">space</div>
<div class="t" style="left:441px;top:709px;font-size:7px;line-height:7px;color:#909090;">a</div>
<div class="t" style="left:487px;top:709px;font-size:7px;line-height:7px;color:#909090;">b</div>
<div class="t" style="left:550px;top:709px;font-size:7px;line-height:7px;color:#909090;">a</div>
<div class="t" style="left:592px;top:709px;font-size:7px;line-height:7px;color:#909090;">b</div>
<div class="t" style="left:717px;top:709px;font-size:7px;line-height:7px;color:#909090;">a</div>
<div class="t" style="left:759px;top:709px;font-size:7px;line-height:7px;color:#909090;">b</div>
<div class="t" style="left:633px;top:709px;font-size:7px;line-height:7px;color:#000;">a</div>
<div class="t" style="left:676px;top:709px;font-size:7px;line-height:7px;color:#000;">b</div>
<div class="t" style="left:794px;top:709px;font-size:7px;line-height:7px;color:#000;">a</div>
<div class="t" style="left:837px;top:709px;font-size:7px;line-height:7px;color:#000;">b</div></body></html>
